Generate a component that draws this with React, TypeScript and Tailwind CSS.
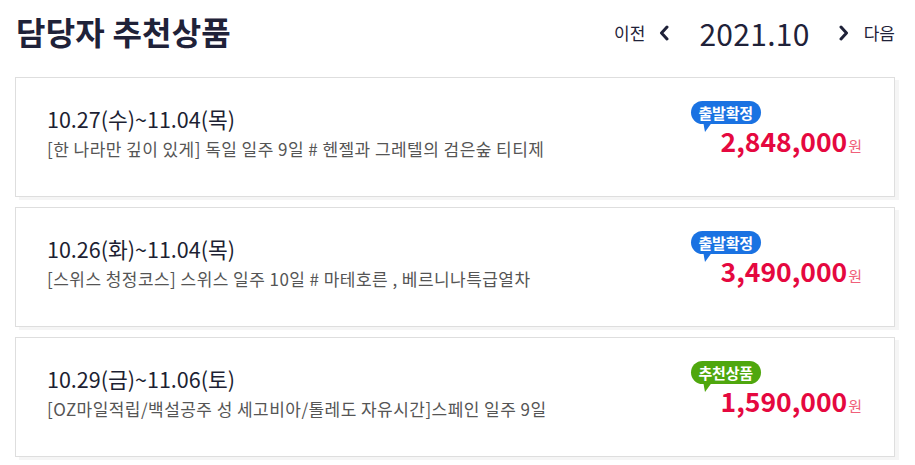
type Item = {
  date: string;
  title: string;
  badge: string;
  badgeColor: "blue" | "green";
  price: string;
};

const items: Item[] = [
  {
    date: "10.27(수)~11.04(목)",
    title: "[한 나라만 깊이 있게] 독일 일주 9일 # 헨젤과 그레텔의 검은숲 티티제",
    badge: "출발확정",
    badgeColor: "blue",
    price: "2,848,000",
  },
  {
    date: "10.26(화)~11.04(목)",
    title: "[스위스 청정코스] 스위스 일주 10일 # 마테호른 , 베르니나특급열차",
    badge: "출발확정",
    badgeColor: "blue",
    price: "3,490,000",
  },
  {
    date: "10.29(금)~11.06(토)",
    title: "[OZ마일적립/백설공주 성 세고비아/톨레도 자유시간]스페인 일주 9일",
    badge: "추천상품",
    badgeColor: "green",
    price: "1,590,000",
  },
];

function Chevron({ dir }: { dir: "left" | "right" }) {
  return (
    <svg width="10" height="16" viewBox="0 0 10 16" fill="none">
      <path
        d={dir === "left" ? "M8 2 L2.5 8 L8 14" : "M2 2 L7.5 8 L2 14"}
        stroke="#1f2239"
        strokeWidth="3"
        strokeLinecap="round"
        strokeLinejoin="round"
      />
    </svg>
  );
}

function Badge({ label, color }: { label: string; color: "blue" | "green" }) {
  const bg = color === "blue" ? "bg-[#1a72e2]" : "bg-[#4fa70e]";
  const fill = color === "blue" ? "#1a72e2" : "#4fa70e";
  return (
    <div className="relative w-fit">
      <div
        className={`${bg} flex h-[23px] items-center rounded-full px-[8px] text-[15px] font-bold leading-none tracking-[-0.2px] text-white`}
      >
        {label}
      </div>
      {/* speech bubble tail */}
      <svg className="absolute left-[12px] top-[20px]" width="10" height="12" viewBox="0 0 10 12">
        <path d="M0 0 L10 0 L2 11 Z" fill={fill} />
      </svg>
    </div>
  );
}

export default function App() {
  return (
    <div
      className="min-h-screen bg-white pl-[15px] pr-[20px]"
      style={{ fontFamily: '"Noto Sans CJK KR", "Noto Sans", sans-serif' }}
    >
      {/* header */}
      <div className="flex h-[77px] items-start justify-between">
        <h1 className="ml-[1px] pt-[11px] text-[32px] font-bold leading-[40px] tracking-[0.2px] text-[#1f2239]">
          담당자 추천상품
        </h1>
        <div className="flex items-center pt-[14px] text-[#1f2239]">
          <span className="text-[17px] leading-[38px]">이전</span>
          <span className="ml-[14px]">
            <Chevron dir="left" />
          </span>
          <span className="ml-[30px] text-[30px] leading-[38px] tracking-[0.3px]">2021.10</span>
          <span className="ml-[29px]">
            <Chevron dir="right" />
          </span>
          <span className="ml-[15px] text-[17px] leading-[38px]">다음</span>
        </div>
      </div>

      {/* list */}
      <div className="flex flex-col gap-[10px]">
        {items.map((it) => (
          <div
            key={it.date}
            className="flex h-[120px] justify-between border border-[#dedede] bg-white pl-[31px] pr-[32px] shadow-[4px_3px_0_#f5f5f5]"
          >
            <div className="pt-[26px]">
              <div className="text-[21.5px] leading-[30px] text-[#1d1f33]">{it.date}</div>
              <div className="mt-[3px] text-[17px] leading-[24px] tracking-[0.45px] text-[#555]">
                {it.title}
              </div>
            </div>
            <div className="flex flex-col items-start pt-[23px]">
              <Badge label={it.badge} color={it.badgeColor} />
              <div className="ml-[30px] mt-[1px] flex items-baseline">
                <span className="text-[26.5px] font-bold leading-[32px] text-[#e5083f]">{it.price}</span>
                <span className="ml-[1px] text-[15px] text-[#f0607a]">원</span>
              </div>
            </div>
          </div>
        ))}
      </div>
    </div>
  );
}
